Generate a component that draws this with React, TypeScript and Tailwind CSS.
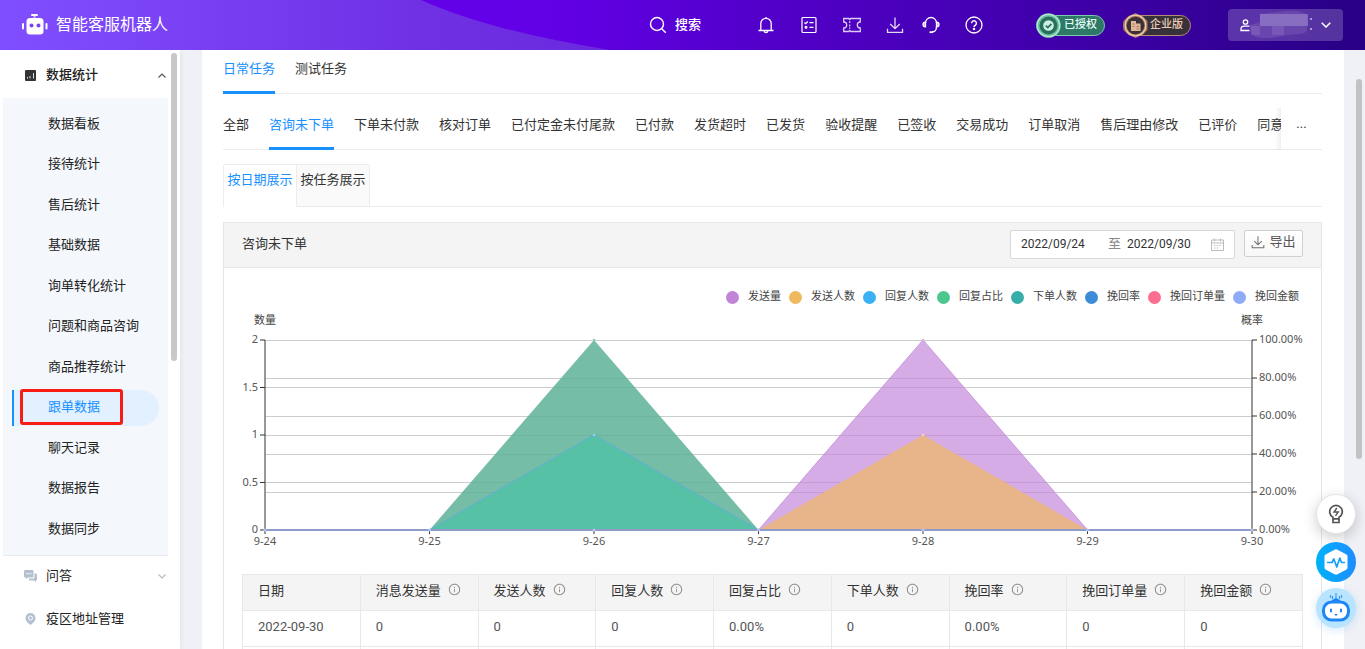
import React, { useState } from "react";
import { AiOutlineInfoCircle } from "react-icons/ai";

const CJK = "font-['Roboto','Noto_Sans_CJK_SC',sans-serif]";

const menuItems = [
  "数据看板",
  "接待统计",
  "售后统计",
  "基础数据",
  "询单转化统计",
  "问题和商品咨询",
  "商品推荐统计",
  "跟单数据",
  "聊天记录",
  "数据报告",
  "数据同步",
];

const statusTabs = [
  "全部",
  "咨询未下单",
  "下单未付款",
  "核对订单",
  "已付定金未付尾款",
  "已付款",
  "发货超时",
  "已发货",
  "验收提醒",
  "已签收",
  "交易成功",
  "订单取消",
  "售后理由修改",
  "已评价",
  "同意",
];

const legend = [
  { name: "发送量", dot: "bg-[#c184d8]" },
  { name: "发送人数", dot: "bg-[#f0b860]" },
  { name: "回复人数", dot: "bg-[#3ab1f3]" },
  { name: "回复占比", dot: "bg-[#4cc88e]" },
  { name: "下单人数", dot: "bg-[#37aeaa]" },
  { name: "挽回率", dot: "bg-[#3c8cd8]" },
  { name: "挽回订单量", dot: "bg-[#fd6d90]" },
  { name: "挽回金额", dot: "bg-[#8fabf8]" },
];

const columns = [
  { title: "日期", tip: false },
  { title: "消息发送量", tip: true },
  { title: "发送人数", tip: true },
  { title: "回复人数", tip: true },
  { title: "回复占比", tip: true },
  { title: "下单人数", tip: true },
  { title: "挽回率", tip: true },
  { title: "挽回订单量", tip: true },
  { title: "挽回金额", tip: true },
];

const rows = [
  ["2022-09-30", "0", "0", "0", "0.00%", "0", "0.00%", "0", "0"],
  ["2022-09-29", "0", "0", "0", "0.00%", "0", "0.00%", "0", "0"],
];

function HeaderBackdrop() {
  return (
    <svg className="absolute inset-0 h-full w-full" viewBox="0 0 1365 50" preserveAspectRatio="none" aria-hidden="true">
      <defs>
        <linearGradient id="hdLight" x1="0" x2="1" y1="0" y2="0">
          <stop offset="0" stopColor="#804fff" />
          <stop offset="0.3" stopColor="#7031e5" />
          <stop offset="0.46" stopColor="#6929dc" />
          <stop offset="1" stopColor="#6929dc" />
        </linearGradient>
        <linearGradient id="hdDark" gradientUnits="userSpaceOnUse" x1="421" x2="1365" y1="0" y2="0">
          <stop offset="0" stopColor="#6300e8" />
          <stop offset="0.13" stopColor="#6200e6" />
          <stop offset="0.4" stopColor="#5000c6" />
          <stop offset="0.7" stopColor="#3e00a8" />
          <stop offset="1" stopColor="#280085" />
        </linearGradient>
      </defs>
      <rect width="1365" height="50" fill="url(#hdLight)" />
      <path d="M421 0Q490 31 610 50H1365V0Z" fill="url(#hdDark)" />
    </svg>
  );
}

function RobotLogo() {
  return (
    <svg width="26" height="22" viewBox="0 0 26 22" fill="#fff" aria-hidden="true">
      <rect x="9" y="0" width="7" height="2" rx="1" />
      <path d="M11.500 2h2v2h-2z" opacity=".6" />
      <rect x="4.500" y="4" width="17" height="16.500" rx="3.500" />
      <rect x="0" y="9" width="2" height="6.500" rx="1" />
      <rect x="23.500" y="9" width="2" height="6.500" rx="1" />
      <circle cx="9.500" cy="11.500" r="2" fill="#7845f4" />
      <circle cx="16.500" cy="11.500" r="2" fill="#7845f4" />
    </svg>
  );
}

const iconProps = {
  width: 18,
  height: 18,
  viewBox: "0 0 18 18",
  fill: "none",
  stroke: "currentColor",
  strokeWidth: 1.3,
  "aria-hidden": true,
} as const;

const SearchIcon = () => (
  <svg {...iconProps} strokeWidth={1.4}>
    <circle cx="8" cy="8" r="6.500" />
    <path d="M12.700 12.700 16.800 16.800" />
  </svg>
);
const BellIcon = () => (
  <svg {...iconProps}>
    <path d="M3.800 14.300V7.500a5.200 5.200 0 0 1 10.400 0v6.800M1.500 14.500h15M7.300 15a1.700 1.700 0 0 0 3.400 0M9 2.300V1" />
  </svg>
);
const ListIcon = () => (
  <svg {...iconProps} strokeWidth={1.2}>
    <rect x="2" y="1.500" width="14" height="15" rx="1" />
    <path d="m4.500 6.500 1.200 1.200L7.800 5.500M9.500 6.700h4M9.500 11.300h4" />
    <circle cx="6" cy="11.300" r=".9" />
  </svg>
);
const TicketIcon = () => (
  <svg {...iconProps} opacity={0.8}>
    <path d="M.7 2.500h5l1 1 1-1H17.300V6a3 3 0 0 0 0 6v3.500H7.700l-1-1-1 1h-5V12a3 3 0 0 0 0-6Z" />
    <path d="M6.700 5.300v1.800M6.700 8.600v1.800M6.700 11.500v1.300" />
  </svg>
);
const DownloadIcon = ({ size = 18 }: { size?: number }) => (
  <svg {...iconProps} width={size} height={size} opacity={0.85}>
    <path d="M9 1.500v11M4.200 8 9 12.700 13.800 8M1.500 12.800v3.500h15v-3.500" />
  </svg>
);
const HeadsetIcon = () => (
  <svg {...iconProps}>
    <path d="M3.500 7a5.500 5.500 0 0 1 11 0M14.500 10.500c0 3.300-1.800 5.500-4.500 5.500" />
    <path d="M3.500 6.200C1.800 6.200 1 7.200 1 8.500s.8 2.300 2.500 2.300ZM14.500 6.200c1.700 0 2.500 1 2.500 2.300s-.8 2.300-2.500 2.300Z" fill="currentColor" fillOpacity=".6" />
    <path d="M7.500 16.200H11" strokeWidth="1.800" />
  </svg>
);
const HelpIcon = () => (
  <svg {...iconProps}>
    <circle cx="9" cy="9" r="8" />
    <path d="M6.600 7.200a2.400 2.400 0 1 1 3.600 2.100c-.8.500-1.200.9-1.200 1.700" strokeWidth="1.500" />
    <circle cx="9" cy="13" r=".6" fill="currentColor" />
  </svg>
);

function AuthMedal() {
  return (
    <svg className="absolute top-0 left-0" width="25" height="25" viewBox="0 0 25 25" aria-hidden="true">
      <circle cx="12.500" cy="12.500" r="12.300" fill="#6fbfa4" />
      <circle cx="12.500" cy="12.500" r="11.200" fill="none" stroke="#b4ecd2" strokeWidth="1.200" />
      <circle cx="12.500" cy="12.500" r="9" fill="#28705c" />
      <circle cx="12.500" cy="12.500" r="5.300" fill="#cdefe2" />
      <path d="m9.800 12.600 2 2 3.600-3.800" fill="none" stroke="#28705c" strokeWidth="1.700" />
    </svg>
  );
}

function CorpMedal() {
  return (
    <svg className="absolute top-0 left-0" width="25" height="25" viewBox="0 0 25 25" aria-hidden="true">
      <path d="M12.500 0 20 3.500 24.500 8v9L20 21.500 12.500 25 5 21.500.5 17V8L5 3.500Z" fill="#a87a62" />
      <circle cx="12.500" cy="12.500" r="10.300" fill="none" stroke="#eccbb2" strokeWidth="1.200" />
      <circle cx="12.500" cy="12.500" r="8.800" fill="#3a3234" />
      <path d="M8 8h5v2.500h4.500V18H8Z" fill="#e0b598" />
      <path d="M9.500 11h2M9.500 13.500h2M13.500 13.500H16M13.500 15.800H16" stroke="#a87a62" strokeWidth="1" />
    </svg>
  );
}

function Header() {
  return (
    <header className="relative h-[50px] shrink-0 text-white">
      <HeaderBackdrop />
      <div className="relative flex h-full items-center pr-[22px] pl-[22px]">
        <a href="#home" className="flex items-center gap-2 text-base">
          <RobotLogo />
          智能客服机器人
        </a>
        <div className="ml-auto flex items-center">
          <button type="button" className="mr-14 flex items-center gap-2 text-[13px] font-medium">
            <SearchIcon />
            搜索
          </button>
          <nav className="flex items-center gap-[25px]" aria-label="工具">
            <button type="button" aria-label="通知"><BellIcon /></button>
            <button type="button" aria-label="任务"><ListIcon /></button>
            <button type="button" aria-label="卡券"><TicketIcon /></button>
            <span className="flex items-center gap-[18px]">
              <button type="button" aria-label="下载"><DownloadIcon /></button>
              <button type="button" aria-label="客服"><HeadsetIcon /></button>
            </span>
            <button type="button" aria-label="帮助"><HelpIcon /></button>
          </nav>
          <div className="ml-[53px] flex items-center gap-[18px] text-[11px] font-medium">
            <span className="relative flex h-[25px] w-[69px] items-center">
              <span className="flex h-[21px] w-full items-center justify-end rounded-full border border-[#7fcbb0] bg-[#2d7866] pr-[7px] text-[#e6fbf3]">
                已授权
              </span>
              <AuthMedal />
            </span>
            <span className="relative flex h-[25px] w-[68px] items-center">
              <span className="flex h-[21px] w-full items-center justify-end rounded-full border border-[#b98a72] bg-[#37323a] pr-[7px] text-[#eccbb2]">
                企业版
              </span>
              <CorpMedal />
            </span>
          </div>
          <button
            type="button"
            aria-label="账号"
            className="ml-[37px] flex h-8 w-[115px] items-center rounded bg-white/20 px-3"
          >
            <svg width="10" height="14" viewBox="0 0 10 14" fill="none" stroke="#fff" strokeWidth="1.300" aria-hidden="true">
              <circle cx="5.500" cy="4" r="2.200" />
              <path d="M9.500 12.500H1V11c0-1.700 1.500-2.800 3.500-2.800h5" />
            </svg>
            <svg width="64" height="30" viewBox="0 0 64 30" aria-hidden="true">
              <path d="M0 15 10 12V4l26-3c12-1 20 1 21 6v14c-3 4-14 3-20 4-11 3-24 4-31 2C3 26 0 22 0 15Z" fill="#7553b2" opacity=".6" />
              <path d="M10 4h48v12H10z" fill="#9a84cc" opacity=".65" />
              <path d="M22 16h12v9H22zM1 16h9v9H1z" fill="#9a84cc" opacity=".3" />
              <path d="M61 8v2M61 18v2" stroke="#fff" strokeWidth="1" />
            </svg>
            <svg className="ml-auto" width="10" height="6" viewBox="0 0 10 6" fill="none" stroke="#fff" strokeWidth="1.500" aria-hidden="true">
              <path d="m.7.7 4.300 4.300L9.300.7" />
            </svg>
          </button>
        </div>
      </div>
    </header>
  );
}

function Sidebar() {
  const [active, setActive] = useState("跟单数据");
  return (
    <aside className="relative z-10 w-[180px] shrink-0 bg-white pr-3 pl-[3px] text-[13px] text-[#222] shadow-[0_0_6px_rgba(0,0,0,0.08)]">
      <button type="button" className="flex h-12 w-full items-center pt-0.5 pl-[22px] pr-0.5 font-medium">
        <svg className="mr-2.5" width="11" height="11" viewBox="0 0 11 11" aria-hidden="true">
          <rect width="11" height="11" rx="1" fill="#333" />
          <path d="M2.500 7v1.500M5 6v2.500M8.500 3v5.500" stroke="#ddd" strokeWidth="1" />
        </svg>
        数据统计
        <svg className="ml-auto" width="8" height="5" viewBox="0 0 8 5" fill="none" stroke="#555" strokeWidth="1.200" aria-hidden="true">
          <path d="M.5 4.500 4 1l3.500 3.500" />
        </svg>
      </button>
      <ul className="flex h-[458px] flex-col justify-between border-b border-[#e6eaf0] bg-[#f4f8fc] px-[9px] py-2">
        {menuItems.map((m) => (
          <li key={m}>
            <a
              href="#menu"
              onClick={() => setActive(m)}
              className={
                m === active
                  ? "relative flex h-9 items-center rounded-r-full border-l-2 border-[#1890ff] bg-[#e2f0ff] pb-0.5 pl-[34px] text-[#1890ff]"
                  : "flex h-9 items-center border-l-2 border-transparent pb-px pl-[34px]"
              }
            >
              {m}
              {m === "跟单数据" && (
                <span className="absolute -top-px left-1.5 h-9 w-[103px] rounded-[3px] border-3 border-[#f91c12]" />
              )}
            </a>
          </li>
        ))}
      </ul>
      <div className="flex flex-col gap-[3px]">
        <button type="button" className="flex h-10 items-center pl-[21px] pr-0.5">
          <svg className="mr-[9px]" width="13" height="12" viewBox="0 0 13 12" aria-hidden="true">
            <path d="M1 0h7.500a1 1 0 0 1 1 1v5.500a1 1 0 0 1-1 1H4L2 9V7.500H1a1 1 0 0 1-1-1V1a1 1 0 0 1 1-1Z" fill="#b4bfd0" />
            <path d="M2 3.700h5.500" stroke="#fff" strokeDasharray="1.500 .7" />
            <path d="M10.500 3.500H12a1 1 0 0 1 1 1v5a1 1 0 0 1-1 1v1.500l-2-1.500H6a1 1 0 0 1-1-1v-1h4.500a1 1 0 0 0 1-1Z" fill="#b4bfd0" />
          </svg>
          问答
          <svg className="ml-auto" width="8" height="5" viewBox="0 0 8 5" fill="none" stroke="#bbb" strokeWidth="1.200" aria-hidden="true">
            <path d="M.5.5 4 4 7.500.5" />
          </svg>
        </button>
        <a href="#address" className="flex h-10 items-center pl-[22px]">
          <svg className="mr-2.5" width="11" height="12" viewBox="0 0 11 12" aria-hidden="true">
            <path d="M5.500 0a5 5 0 0 1 5 5c0 2.800-2 4.800-5 7-3-2.200-5-4.200-5-7a5 5 0 0 1 5-5Z" fill="#b4bfd0" />
            <circle cx="5.500" cy="5" r="2" fill="none" stroke="#fff" />
          </svg>
          疫区地址管理
        </a>
      </div>
      <span className="absolute top-[3px] right-[3px] h-[308px] w-1.5 rounded-full bg-[#c8c8c8]" />
    </aside>
  );
}

const X0 = 41;
const STEP = 164.5;
const BASE = 222;
const TOP = 32;
const H = BASE - TOP;
const px = (i: number) => X0 + STEP * i;
const py = (v: number) => BASE - (H * v) / 2;
const area = (from: number, v: number) =>
  `M${px(from)} ${BASE}L${px(from + 1)} ${py(v)}L${px(from + 2)} ${BASE}Z`;

function Chart() {
  const days = ["9-24", "9-25", "9-26", "9-27", "9-28", "9-29", "9-30"];
  const left = [0, 0.5, 1, 1.5, 2];
  const right = [0, 20, 40, 60, 80, 100];
  return (
    <svg
      className="block h-auto w-full font-['Noto_Sans','Noto_Sans_CJK_SC',sans-serif] text-[11px]"
      viewBox="0 0 1097 266"
      role="img"
      aria-label="咨询未下单数据图"
    >
      <g stroke="#ccc" strokeWidth="1" shapeRendering="crispEdges">
        {left.slice(1).map((v) => (
          <path key={v} d={`M${X0} ${py(v)}H${px(6)}`} />
        ))}
        {right.slice(1, 5).map((v) => (
          <path key={v} d={`M${X0} ${py(v / 50)}H${px(6)}`} />
        ))}
      </g>
      <path d={area(1, 2)} fill="#5bb096" fillOpacity=".84" />
      <path d={area(1, 1)} fill="#56c1a6" fillOpacity=".97" />
      <path d={`M${px(1)} ${BASE}L${px(2)} ${py(1)}L${px(3)} ${BASE}`} fill="none" stroke="#5fb3cb" strokeWidth="1.200" />
      <path d={area(3, 2)} fill="#c184d8" fillOpacity=".68" stroke="#cb98df" strokeWidth="1" />
      <path d={area(3, 1)} fill="#e9b583" fillOpacity=".93" />
      <g stroke="#333" strokeWidth="1">
        <path d={`M${X0} ${TOP}V${BASE}M${px(6)} ${TOP}V${BASE}`} stroke="#777" strokeWidth="1.500" />
        {left.map((v) => (
          <path key={v} d={`M${X0 - 5} ${py(v)}H${X0}`} />
        ))}
        {right.map((v) => (
          <path key={v} d={`M${px(6)} ${py(v / 50)}h5`} />
        ))}
        {days.map((d, i) => (
          <path key={d} d={`M${px(i)} ${BASE}v4`} />
        ))}
      </g>
      <path d={`M${X0} ${BASE}H${px(6)}`} stroke="#8f9bc9" strokeWidth="2" />
      {days.map((d, i) => (
        <circle key={d} cx={px(i)} cy={BASE} r="1.500" fill="#b3c3f2" />
      ))}
      <circle cx={px(2)} cy={py(1)} r="1.300" fill="#8fd0ea" />
      <circle cx={px(2)} cy={py(2)} r="1.300" fill="#8fd0b4" />
      <circle cx={px(4)} cy={py(1)} r="1.300" fill="#f7d9b0" />
      <circle cx={px(4)} cy={py(2)} r="1.300" fill="#d9b0e6" />
      <g fill="#555">
        <text x={X0} y="16" textAnchor="middle" fill="#444">数量</text>
        <text x={px(6)} y="16" textAnchor="middle" fill="#444">概率</text>
        {left.map((v) => (
          <text key={v} x={X0 - 7} y={py(v) + 3} textAnchor="end">{v}</text>
        ))}
        {right.map((v) => (
          <text key={v} x={px(6) + 7} y={py(v / 50) + 3}>{v.toFixed(2)}%</text>
        ))}
        {days.map((d, i) => (
          <text key={d} x={px(i)} y={BASE + 15} textAnchor="middle">{d}</text>
        ))}
      </g>
    </svg>
  );
}

const lineTab = "relative flex shrink-0 justify-center whitespace-nowrap border-b-3";

function Panel() {
  const [start, setStart] = useState("2022/09/24");
  const [end, setEnd] = useState("2022/09/30");
  return (
    <section className="mt-[15px] border border-[#e6e6e6]">
      <div className="flex h-[45px] items-center border-b border-[#e6e6e6] bg-[#f4f4f4] px-[18px] pb-0.5">
        <h2>咨询未下单</h2>
        <div className="ml-auto flex h-[29px] w-[225px] items-center rounded-xs border border-[#d9d9d9] bg-white pl-2.5 text-xs text-[#333]">
          <input aria-label="开始日期" className="w-[87px] outline-none" value={start} onChange={(e) => setStart(e.target.value)} />
          <span className="w-[19px] text-[13px] text-[#888]">至</span>
          <input aria-label="结束日期" className="w-[84px] outline-none" value={end} onChange={(e) => setEnd(e.target.value)} />
          <svg width="13" height="13" viewBox="0 0 13 13" fill="none" stroke="#bbb" aria-hidden="true">
            <path d="M.5 2h12v10.500H.5ZM.5 5h12M3.500.500v3M9.500.500v3" />
            <path d="M3 7.500h7M3 10h5" strokeDasharray="1.500 1.200" />
          </svg>
        </div>
        <button
          type="button"
          className="mb-0.5 ml-[9px] flex h-[27px] w-[59px] items-center justify-center gap-1 rounded-xs border border-[#d0d0d0] bg-gradient-to-b from-white to-[#f7f7f7] pb-0.5 text-[#555]"
        >
          <DownloadIcon size={14} />
          导出
        </button>
      </div>
      <ul className="flex h-10 items-center justify-end gap-2 pt-[17px] pr-[22px] text-[11px] text-[#444]">
        {legend.map((l) => (
          <li key={l.name} className="flex items-center gap-[9px] whitespace-nowrap">
            <span className={`mt-px size-[13px] rounded-full ${l.dot}`} />
            {l.name}
          </li>
        ))}
      </ul>
      <Chart />
      <div className="px-[18px]">
        <table className="w-full table-fixed border-collapse text-left">
          <thead>
            <tr className="h-9 bg-[#f4f4f4] text-[#333]">
              {columns.map((c) => (
                <th key={c.title} className="border border-[#e8e8e8] pb-1 pl-[15px] font-normal whitespace-nowrap">
                  <span className="inline-flex items-center gap-[7px]">
                    {c.title}
                    {c.tip && <AiOutlineInfoCircle className="mb-0.5 size-[13px] text-[#888]" />}
                  </span>
                </th>
              ))}
            </tr>
          </thead>
          <tbody>
            {rows.map((r) => (
              <tr key={r[0]} className="h-9 text-[#555]">
                {r.map((v, i) => (
                  <td key={i} className="border border-[#e8e8e8] pb-1 pl-[15px]">{v}</td>
                ))}
              </tr>
            ))}
          </tbody>
        </table>
      </div>
    </section>
  );
}

function Content() {
  const [mode, setMode] = useState("日常任务");
  const [status, setStatus] = useState("咨询未下单");
  const [view, setView] = useState("按日期展示");
  return (
    <main className="ml-[22px] min-w-0 flex-1 bg-white pr-[22px] pl-[21px]">
      <div className="flex h-11 gap-5 shadow-[inset_0_-1px_0_#ececec]" role="tablist">
        {["日常任务", "测试任务"].map((t) => (
          <button
            key={t}
            type="button"
            role="tab"
            aria-selected={t === mode}
            onClick={() => setMode(t)}
            className={`${lineTab} pt-[9px] ${t === mode ? "border-[#1890ff] text-[#1890ff]" : "border-transparent"}`}
          >
            {t}
          </button>
        ))}
      </div>
      <div className="flex h-14 shadow-[inset_0_-1px_0_#ececec]">
        <div className="relative min-w-0 flex-1 overflow-hidden">
          <div className="flex h-full gap-5" role="tablist">
            {statusTabs.map((t) => (
              <button
                key={t}
                type="button"
                role="tab"
                aria-selected={t === status}
                onClick={() => setStatus(t)}
                className={`${lineTab} pt-[21px] ${t === status ? "border-[#1890ff] text-[#1890ff]" : "border-transparent"}`}
              >
                {t}
              </button>
            ))}
          </div>
          <span className="absolute right-0 bottom-0 h-[42px] w-1.5 bg-gradient-to-r from-transparent to-black/6" />
        </div>
        <button type="button" aria-label="更多" className="w-[41px] pt-1 text-center text-[#333]">...</button>
      </div>
      <div className="mt-[14px] flex h-[43px] shadow-[inset_0_-1px_0_#ececec]" role="tablist">
        {["按日期展示", "按任务展示"].map((t, i) => (
          <button
            key={t}
            type="button"
            role="tab"
            aria-selected={t === view}
            onClick={() => setView(t)}
            className={`flex justify-center border-t border-r border-[#ececec] pt-[5px] ${
              i === 0 ? "w-[74px] rounded-tl-[3px] border-l" : "w-[73px] rounded-tr-[3px]"
            } ${t === view ? "bg-white text-[#1890ff]" : "border-b bg-[#fafafa]"}`}
          >
            {t}
          </button>
        ))}
      </div>
      <Panel />
    </main>
  );
}

function FloatingTools() {
  return (
    <div className="absolute right-[9px] bottom-[21px] z-20 flex flex-col gap-1.5">
      <button type="button" aria-label="提示" className="mb-0.5 flex size-10 items-center justify-center rounded-full border border-[#e4e4e4] bg-white shadow-[0_4px_14px_rgba(0,0,0,0.2)]">
        <svg width="16" height="20" viewBox="0 0 16 20" fill="none" stroke="#555" strokeWidth="1.700" aria-hidden="true">
          <path d="M5 14.800v-1.500A6.300 6.300 0 1 1 11 13.300v1.500Z" />
          <path d="M5 15v3.500h6V15" />
          <path d="M8.800 4 6 8h4.200l-2.700 3.800" strokeWidth="1.400" />
        </svg>
      </button>
      <button type="button" aria-label="监控" className="flex size-10 items-center justify-center rounded-full bg-gradient-to-r from-[#00b2fa] to-[#1c8cff]">
        <svg width="26" height="26" viewBox="0 0 26 26" aria-hidden="true">
          <path d="M11.500.8a3 3 0 0 1 3 0L23.500 5.500a2 2 0 0 1 1 2v11a2 2 0 0 1-1 2l-9 4.700a3 3 0 0 1-3 0l-9-4.700a2 2 0 0 1-1-2v-11a2 2 0 0 1 1-2Z" fill="#fff" />
          <path d="M4 13.500h5l1.800-3.500 3 8 3-9 1.700 4.500H22" fill="none" stroke="#16a0f8" strokeWidth="1.700" strokeLinejoin="round" />
        </svg>
      </button>
      <button type="button" aria-label="机器人" className="flex size-10 items-center justify-center rounded-full bg-[#b9e4ff] shadow-[0_2px_10px_rgba(24,144,255,0.2)]">
        <svg width="30" height="32" viewBox="0 0 30 32" aria-hidden="true">
          <path d="M15 1v8M11.500 4v3M18.500 4v3M9.500 3v3M20.500 3v3" stroke="#3d9bf0" strokeWidth="1.200" />
          <rect x="2.500" y="10" width="25" height="18" rx="8" fill="#fff" stroke="#1f87f5" strokeWidth="3" />
          <path d="M11 8 15 6l4 2v2h-8Z" fill="#1f87f5" />
          <path d="M10 17.500v2M20 17.500v2" stroke="#1f87f5" strokeWidth="2" strokeLinecap="round" />
          <path d="M14 22.500h2l-1 1Z" fill="#1f87f5" stroke="#1f87f5" />
        </svg>
      </button>
    </div>
  );
}

export default function App() {
  return (
    <div className={`relative flex h-screen flex-col overflow-hidden bg-[#f0f1f6] text-[13px] leading-5 text-[#333] ${CJK}`}>
      <Header />
      <div className="flex min-h-0 flex-1 overflow-hidden">
        <Sidebar />
        <Content />
        <div className="w-[21px] shrink-0 pt-[29px] pl-3">
          <div className="h-[380px] w-1.5 rounded-full bg-[#c1c2c4]" />
        </div>
      </div>
      <FloatingTools />
    </div>
  );
}
